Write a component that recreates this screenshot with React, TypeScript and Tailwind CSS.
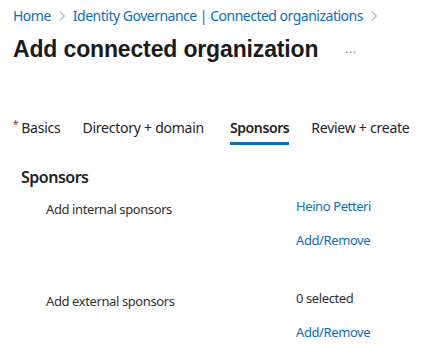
import React from "react"

const font = { fontFamily: '"Noto Sans", "Open Sans", sans-serif' }

const Chevron = () => (
    <svg width="8" height="12" viewBox="0 0 8 12" className="mx-[7px] text-[#8a8886]">
        <path d="M2 1.5 L6.5 6 L2 10.5" fill="none" stroke="currentColor" strokeWidth="1" />
    </svg>
)

const SponsorRow = ({ label, value, link }: { label: string; value: string; link: boolean }) => (
    <div className="flex text-[13px] leading-[18px] tracking-[-0.4px]">
        <div className="w-[296px] pl-[46px] pt-[3px] text-[#323130]">{label}</div>
        <div className="flex flex-col gap-[16px]">
            <span className={link ? "text-[#0f6cbd]" : "text-[#323130]"}>{value}</span>
            <span className="text-[#0f6cbd]">Add/Remove</span>
        </div>
    </div>
)

export default function App() {
    return (
        <div className="h-[362px] w-[434px] overflow-hidden bg-white" style={font}>
            <nav className="flex items-center pl-[13px] pt-[6px] text-[14px] leading-[20px] tracking-[-0.5px] text-[#0f6cbd]">
                <span>Home</span>
                <Chevron />
                <span>Identity Governance | Connected organizations</span>
                <Chevron />
            </nav>
            <div className="mt-[7px] flex items-center pl-[13px]">
                <h1
                    className="text-[23px] font-bold leading-[32px] tracking-[-0.15px] text-[#1b1b1b]"
                    style={{ fontFamily: '"Liberation Sans", Arial, sans-serif' }}
                >
                    Add connected organization
                </h1>
                <span className="ml-[27px] text-[11px] tracking-[1px] text-[#605e5c]">...</span>
            </div>
            <div className="mt-[53px] flex pl-[13px] text-[14px] leading-[20px] tracking-[-0.25px] text-[#242424]">
                <div className="mr-[22px] flex">
                    <span className="mr-[3px] text-[10px] leading-[12px] text-[#a4262c]">*</span>
                    <span>Basics</span>
                </div>
                <div className="mr-[26px]">Directory + domain</div>
                <div className="mr-[22px] border-b-[3px] border-[#0f6cbd] pb-[4px] font-semibold tracking-[-0.4px]">Sponsors</div>
                <div>Review + create</div>
            </div>
            <h2 className="mt-[21px] pl-[21px] text-[16px] font-semibold leading-[22px] tracking-[-0.5px] text-[#242424]">Sponsors</h2>
            <div className="mt-[9px] flex flex-col gap-[40px]">
                <SponsorRow label="Add internal sponsors" value="Heino Petteri" link />
                <SponsorRow label="Add external sponsors" value="0 selected" link={false} />
            </div>
        </div>
    )
}
